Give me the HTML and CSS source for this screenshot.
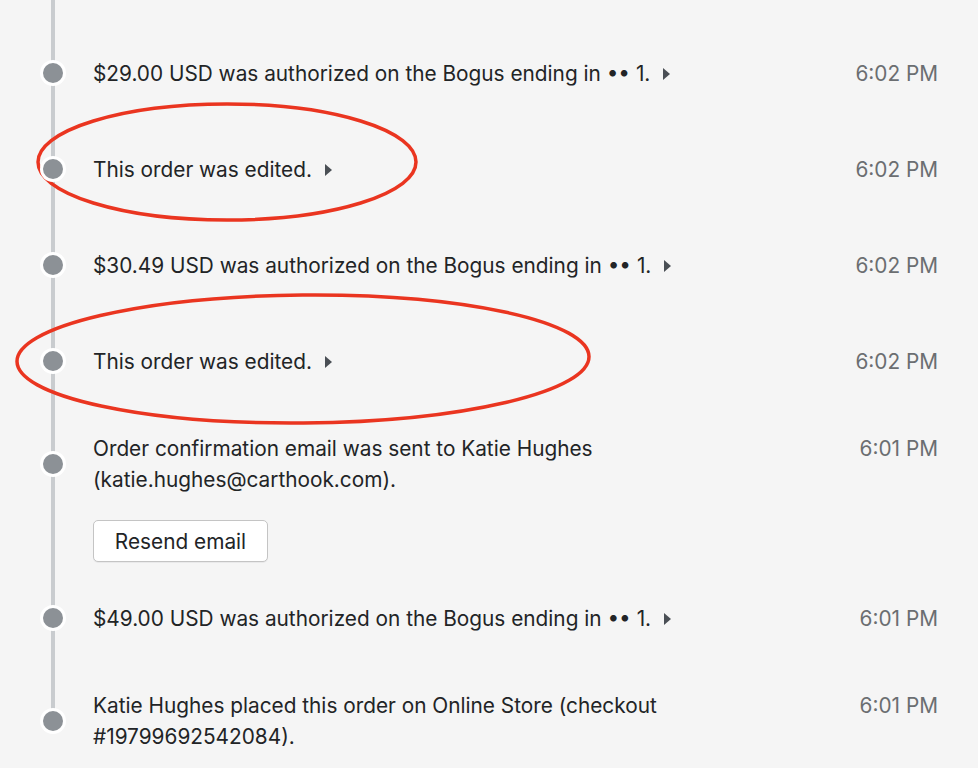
FILE: index.html
```html
<!DOCTYPE html>
<html lang="en">
<head>
<meta charset="utf-8">
<title>Order timeline</title>
<link rel="stylesheet" href="styles.css">
</head>
<body>
<main class="page">
  <ul class="timeline">
    <li class="event">
      <span class="dot"></span>
      <p class="text">$29.00 USD was authorized on the Bogus ending in •• 1.<span class="caret"></span></p>
      <span class="time">6:02 PM</span>
    </li>
    <li class="event">
      <span class="dot"></span>
      <p class="text">This order was edited.<span class="caret"></span></p>
      <span class="time">6:02 PM</span>
    </li>
    <li class="event">
      <span class="dot"></span>
      <p class="text">$30.49 USD was authorized on the Bogus ending in •• 1.<span class="caret"></span></p>
      <span class="time">6:02 PM</span>
    </li>
    <li class="event">
      <span class="dot"></span>
      <p class="text">This order was edited.<span class="caret"></span></p>
      <span class="time">6:02 PM</span>
    </li>
    <li class="event event--action">
      <span class="dot"></span>
      <p class="text">Order confirmation email was sent to Katie Hughes<br>(katie.hughes@carthook.com).</p>
      <span class="time">6:01 PM</span>
      <div class="actions"><button class="btn" type="button">Resend email</button></div>
    </li>
    <li class="event">
      <span class="dot"></span>
      <p class="text">$49.00 USD was authorized on the Bogus ending in •• 1.<span class="caret"></span></p>
      <span class="time">6:01 PM</span>
    </li>
    <li class="event event--last">
      <span class="dot"></span>
      <p class="text">Katie Hughes placed this order on Online Store (checkout<br>#19799692542084).</p>
      <span class="time">6:01 PM</span>
    </li>
  </ul>
  <svg class="annotations" width="978" height="768" viewBox="0 0 978 768" aria-hidden="true">
    <ellipse cx="227" cy="162" rx="189" ry="58" />
    <ellipse cx="303" cy="359" rx="286" ry="64" transform="rotate(-0.5 303 359)" />
  </svg>
</main>
</body>
</html>
```
FILE: styles.css
```css
html, body {
  margin: 0;
  padding: 0;
}
body {
  background: #f5f5f5;
  color: #212b36;
  font-family: Inter, "Noto Sans", "Liberation Sans", sans-serif;
  font-size: 20.8px;
  overflow: hidden;
}
.page {
  position: relative;
  width: 978px;
  height: 768px;
  overflow: hidden;
}
.timeline {
  position: relative;
  list-style: none;
  margin: 0;
  padding: 25px 40px 0 0;
}
.timeline::before {
  content: "";
  position: absolute;
  left: 51px;
  top: 0;
  height: 25px;
  width: 4px;
  background: #c9cccf;
}
.event {
  position: relative;
  display: grid;
  grid-template-columns: 93px 1fr auto;
  align-content: center;
  min-height: 96px;
  padding: 24px 0;
  box-sizing: border-box;
}
.event::before {
  content: "";
  position: absolute;
  left: 51px;
  top: 0;
  bottom: 0;
  width: 4px;
  background: #c9cccf;
}
.event--last::before {
  bottom: auto;
  height: 54px;
}
.event--action {
  padding-bottom: 8px;
}
.dot {
  position: relative;
  z-index: 1;
  grid-column: 1;
  grid-row: 1;
  align-self: center;
  margin-left: 43px;
  width: 20px;
  height: 20px;
  border-radius: 50%;
  background: #8c9196;
  box-shadow: 0 0 0 3px #ffffff;
}
.text {
  grid-column: 2;
  grid-row: 1;
  margin: 0;
  line-height: 31px;
  color: #222426;
}
.caret {
  display: inline-block;
  width: 0;
  height: 0;
  margin-left: 13px;
  vertical-align: 1px;
  border-left: 7px solid #4a4f55;
  border-top: 6px solid transparent;
  border-bottom: 6px solid transparent;
}
.time {
  grid-column: 3;
  grid-row: 1;
  align-self: start;
  line-height: 31px;
  color: #6b6e71;
  white-space: nowrap;
}
.actions {
  grid-column: 2;
  grid-row: 2;
  padding-top: 25px;
}
.btn {
  width: 175px;
  height: 42px;
  padding: 0;
  background: #ffffff;
  border: 1px solid #c4c4c4;
  border-radius: 5px;
  box-shadow: 0 1px 0 rgba(22, 29, 37, 0.05);
  color: #222426;
  font: inherit;
  cursor: pointer;
}
.annotations {
  position: absolute;
  left: 0;
  top: 0;
  pointer-events: none;
}
.annotations ellipse {
  fill: none;
  stroke: #ea3520;
  stroke-width: 3.5;
}
```
